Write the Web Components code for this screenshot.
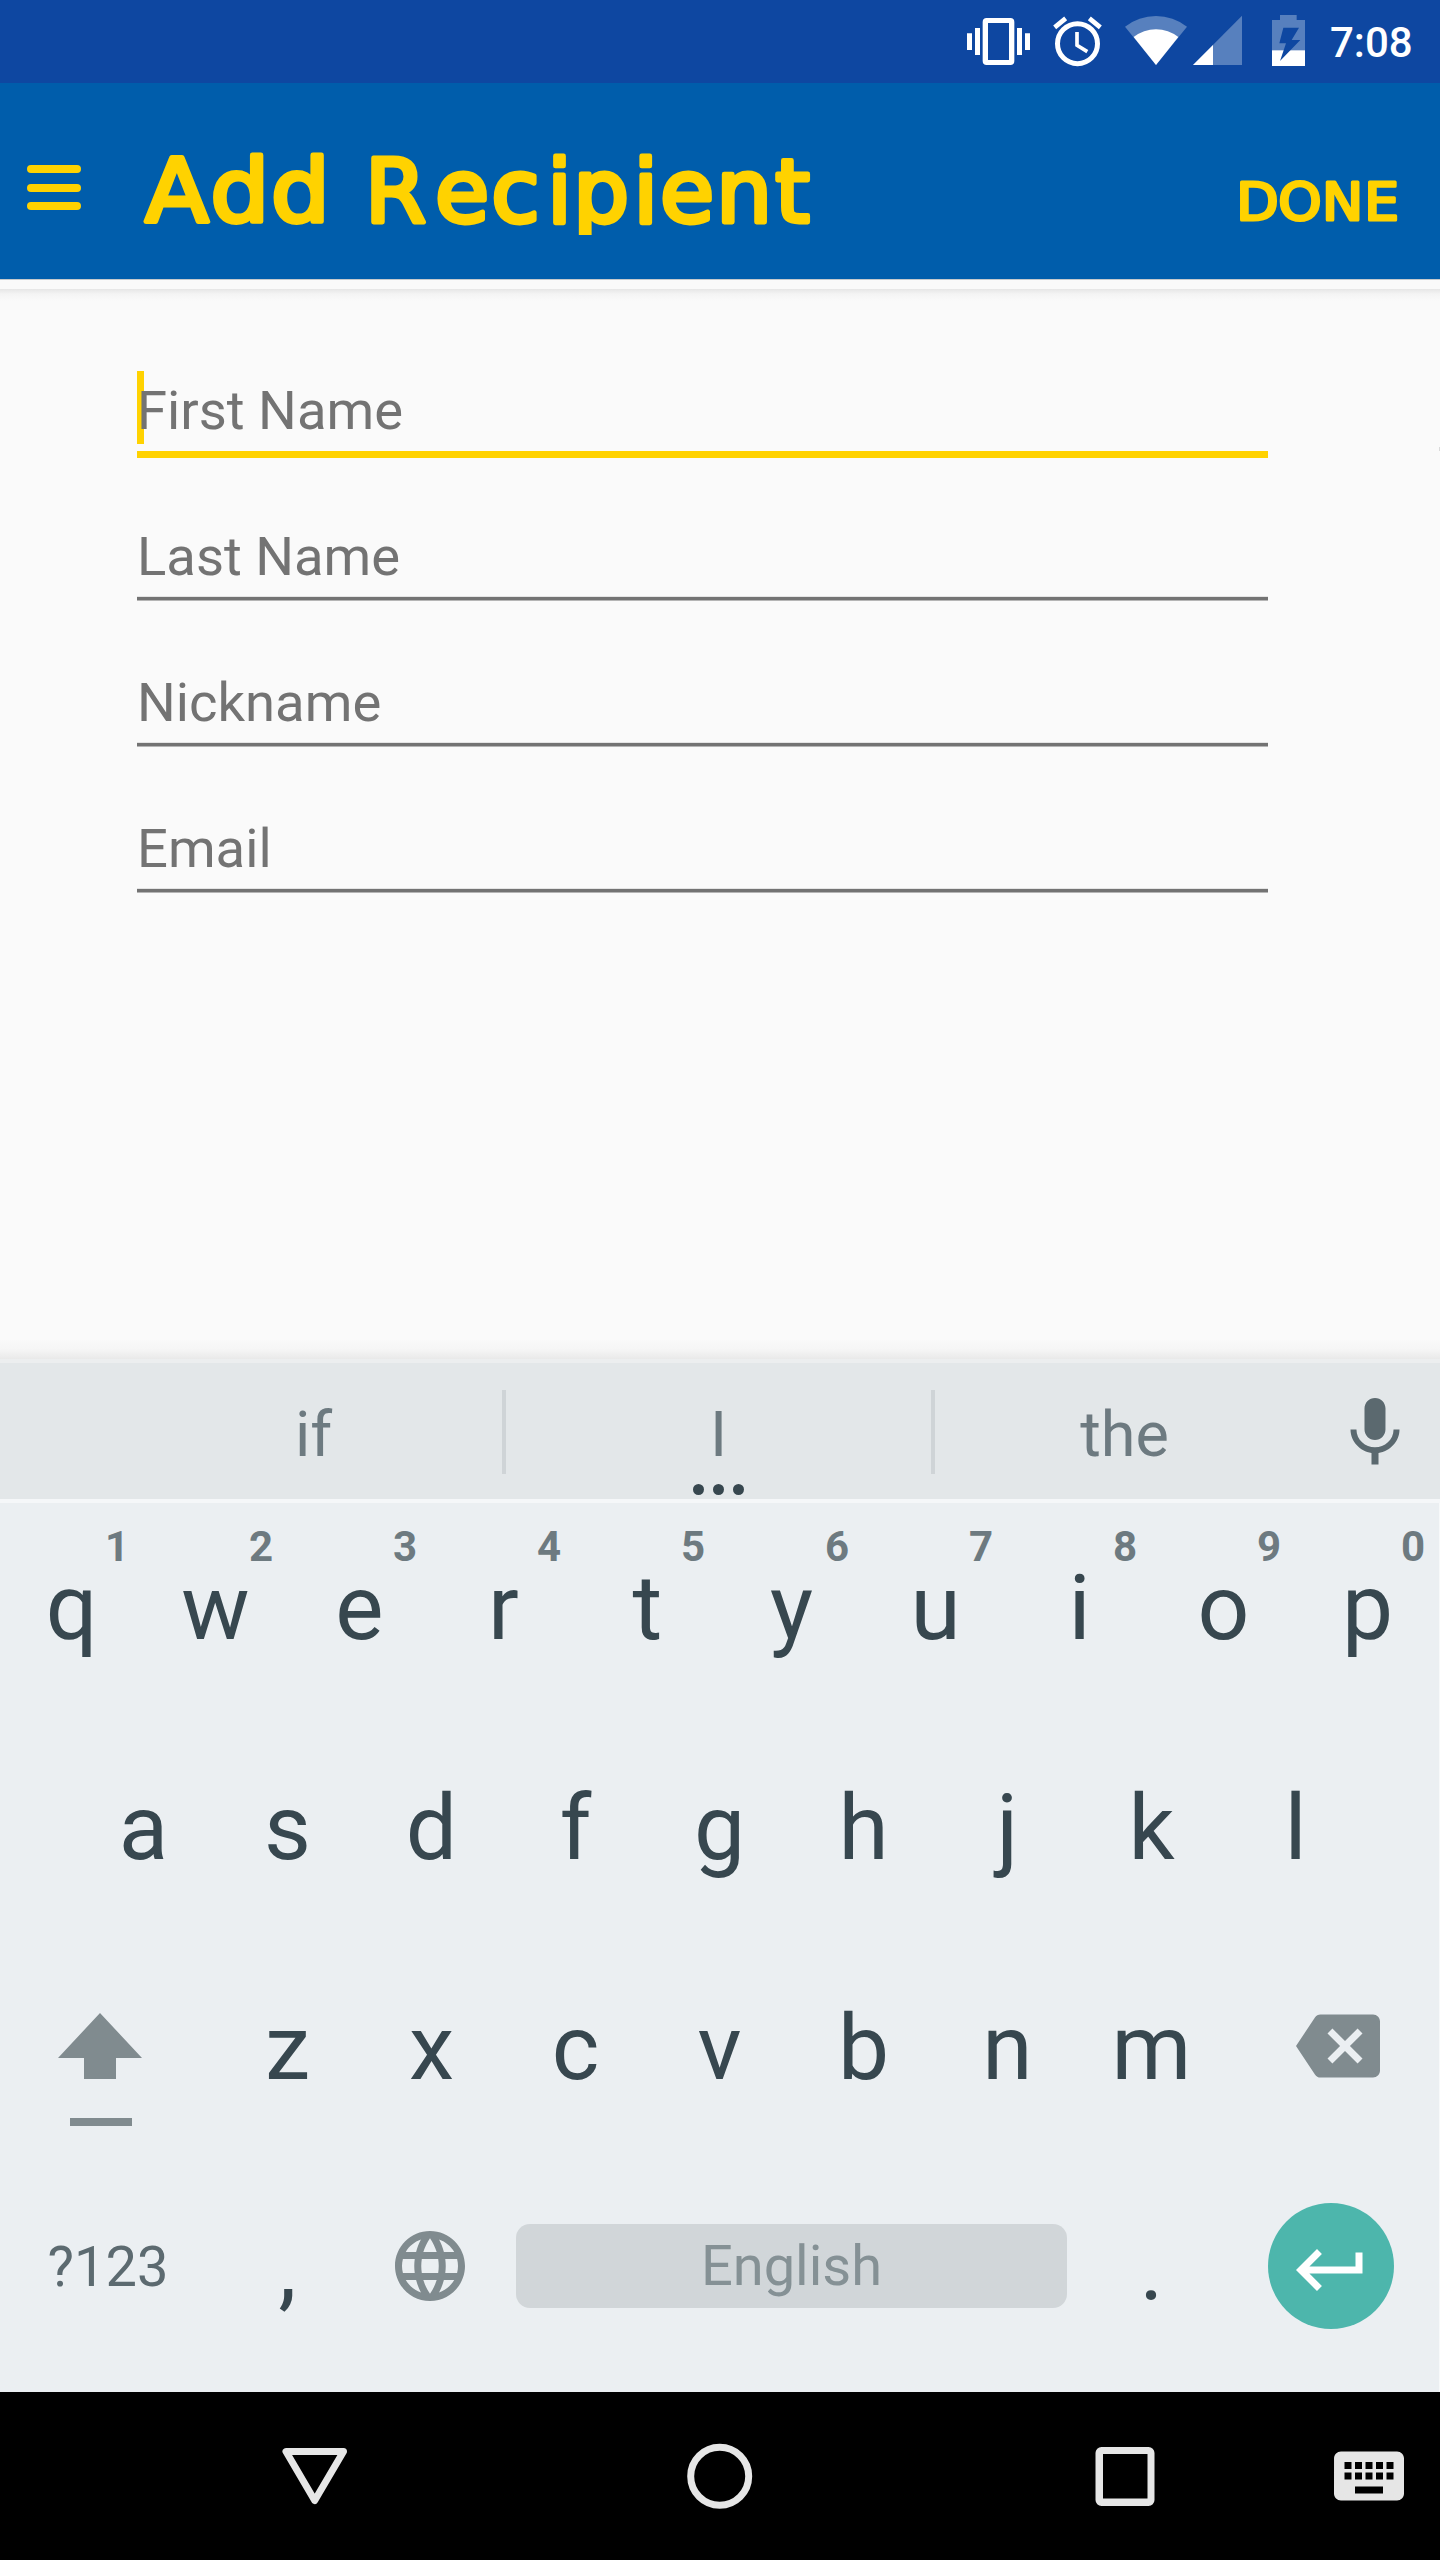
<!DOCTYPE html>
<html lang="en">
<head>
<meta charset="utf-8">
<title>Add Recipient</title>
<style>
html,body{margin:0;padding:0}
body{width:1440px;height:2560px;overflow:hidden;font-family:Roboto,sans-serif;background:#fafafa}
</style>
</head>
<body>
<recipient-screen></recipient-screen>
<script>
const define = (name, html, setup) => {
  const tpl = document.createElement('template');
  tpl.innerHTML = html;
  customElements.define(name, class extends HTMLElement {
    constructor() {
      super();
      this.attachShadow({mode: 'open'}).append(tpl.content.cloneNode(true));
    }
    connectedCallback() { if (setup) setup(this, this.shadowRoot); }
  });
};

define('status-bar', `
<style>
:host{display:flex;height:83px;background:#0e47a1;color:#fff;padding-left:967px;align-items:flex-start}
svg{display:block;height:83px;flex:none}
.alarm{margin-left:23px}.wifi{margin-left:23px}.cell{margin-left:6px}.batt{margin-left:30px}
time{font:500 42px/49px Roboto,sans-serif;margin:18px 0 0 25px;white-space:nowrap}
</style>
<svg width="63" viewBox="81 0 189 249" fill="#fff"><path fill-rule="evenodd" d="M140 54h71a12 12 0 0 1 12 12v117a12 12 0 0 1-12 12h-71a12 12 0 0 1-12-12V66a12 12 0 0 1 12-12zm4 15v111h63V69z"/><path d="M105 84h15v81h-15zM81 100h15v50H81zM231 84h15v81h-15zM255 100h15v50h-15z"/></svg>
<svg class="alarm" width="49" viewBox="339 0 147 249" fill="none" stroke="#fff"><circle cx="412.5" cy="131" r="60" stroke-width="15"/><path stroke-width="14" d="M344 82l33-27M481 82l-33-27"/><path stroke-width="11" d="M411 96v40l31 19"/></svg>
<svg class="wifi" width="62" viewBox="555 0 186 249"><path fill="#5780be" d="M648 195L555 80a151 151 0 0 1 186 0z"/><path fill="#fff" d="M648 195l-67-84a108 108 0 0 1 134 0z"/></svg>
<svg class="cell" width="49" viewBox="759 0 147 249"><path fill="#5780be" d="M759 195h147V47z"/><path fill="#fff" d="M759 195h60v-60z"/></svg>
<svg class="batt" width="33" viewBox="996 0 99 249"><path fill="#5780be" d="M1020 45h50v15h25v91h-99V60h24z"/><path fill="#fff" d="M996 151h99v47h-99z"/><path fill="#0e47a1" d="M1030 83h47l-22 37h26l-61 63 18-53h-20z"/></svg>
<time>7:08</time>`);

/* Toolbar lettering: round-joined outline gives the letters soft ends. */
define('app-bar', `
<style>
:host{display:flex;height:196px;background:#005dab;align-items:flex-start;padding-left:27px}
.menu{display:flex;flex-direction:column;gap:10.5px;margin-top:82px;width:54px;flex:none}
.menu i{height:8px;border-radius:4px;background:#ffd200}
svg{display:block;flex:none}
text{font-family:"DejaVu Sans",sans-serif;fill:#ffd200;stroke:#ffd200;stroke-linejoin:round;stroke-linecap:round}
.title{margin:47px 0 0 59px}
.done{margin:80px 0 0 412px}
</style>
<div class="menu"><i></i><i></i><i></i></div>
<svg class="title" width="680" height="125" viewBox="140 130 680 125"><g font-size="88" stroke-width="4.8"><text transform="translate(143.6 0) scale(1.05 1)" y="221.5" x="1.6 63.8 121.4">Add</text><text y="221.5" x="364.9 435.1 491.3 547.3 573.3 633.5 660.1 716.3 775.3">Recipient</text></g><rect x="560" y="235" width="90" height="20" fill="#005dab"/></svg>
<svg class="done" width="175" height="80" viewBox="1232 163 175 80"><text transform="translate(1240 0) scale(1.08 1)" font-size="51" stroke-width="3" y="220.5" x="-3.5 35.4 75.9 115">DONE</text></svg>`);

define('text-field', `
<style>
:host{display:flex;flex-direction:column;height:146px;box-sizing:border-box;position:relative;width:1131px;color:#737373}
.hint{position:relative;font-size:54.4px;line-height:66px;margin-top:24px;height:73px;white-space:nowrap}
.line{height:3px;background:#737373;border-top:1px solid #e4e4e4;border-bottom:1px solid #b5b5b5;margin-top:-1px}
.caret{display:none}
:host([focused]) .line{height:7px;border:0;background:#ffd200;margin-top:0}
:host([focused]) .caret{display:block;position:absolute;left:0;top:17px;width:7px;height:73px;background:#ffd200}
</style>
<span class="caret"></span>
<div class="hint"><slot></slot></div>
<div class="line"></div>`);

define('recipient-form', `
<style>
:host{display:flex;flex-direction:column;height:1080px;box-sizing:border-box;padding:75px 0 0 137px;position:relative;background:linear-gradient(#c5c9cc 0 1px,#fafafa 1px 10px,#e6e6e6 10px,#f4f4f4 15px,#fafafa 22px,#fafafa 1060px,#f6f6f6 1070px,#e9e9e9 1080px)}
.edge{position:absolute;right:0;top:168px;width:1px;height:4px;background:#dadada}
</style>
<text-field focused>First Name</text-field>
<text-field>Last Name</text-field>
<text-field>Nickname</text-field>
<text-field>Email</text-field>
<span class="edge"></span>`);

define('suggestion-strip', `
<style>
:host{display:flex;height:136px;padding-left:126px;background:#e3e7e9;border-top:4px solid #eceeef;border-bottom:4px solid #f5f7f9;color:#6d7a80}
.w{position:relative;display:flex;align-items:center;justify-content:center;font-size:63px;line-height:74px;box-sizing:border-box;padding-top:7px}
.sep{width:4px;height:84px;margin-top:27px;background:#cfd4d7}
.dots{position:absolute;left:0;right:0;top:120.5px;display:flex;justify-content:center;gap:9px}
.dots i{width:11px;height:11px;border-radius:50%;background:#37474f}
svg{display:block;margin:27.5px 0 0 19px}
</style>
<div class="w" style="width:376px;padding-right:1px">if</div><span class="sep"></span>
<div class="w" style="width:425px">I<span class="dots"><i></i><i></i><i></i></span></div><span class="sep"></span>
<div class="w" style="width:379px">the</div>
<svg width="84" height="84" viewBox="0 0 24 24" fill="#5b696f"><path d="M12 14c1.66 0 2.99-1.34 2.99-3L15 5c0-1.66-1.34-3-3-3S9 3.34 9 5v6c0 1.66 1.34 3 3 3zm5.3-3c0 3-2.54 5.1-5.3 5.1S6.7 14 6.7 11H5c0 3.41 2.72 6.23 6 6.72V21h2v-3.28c3.28-.48 6-3.3 6-6.72h-1.7z"/></svg>`);

define('letter-key', `
<style>
:host{display:flex;position:relative;width:144px;height:220px;box-sizing:border-box;padding:4px 1px 0 0;align-items:center;justify-content:center;font-size:91px;line-height:108px;color:#37474f;flex:none}
.alt{position:absolute;left:67px;width:100px;top:26px;text-align:center;font:700 42px/49px Roboto,sans-serif;color:#6d7a80}
</style>
<slot></slot>`, (el, root) => {
  const alt = el.getAttribute('alt');
  if (alt) {
    const s = document.createElement('span');
    s.className = 'alt';
    s.textContent = alt;
    root.append(s);
  }
});

define('key-row', `
<style>
:host{display:flex;height:220px;align-items:center;justify-content:center}
</style><slot></slot>`, el => {
  const keys = el.getAttribute('keys');
  if (!keys) return;
  const alts = el.getAttribute('alts') || '';
  const anchor = el.querySelector('[data-end]');
  [...keys].forEach((k, i) => {
    const key = document.createElement('letter-key');
    if (alts[i]) key.setAttribute('alt', alts[i]);
    key.textContent = k;
    el.insertBefore(key, anchor);
  });
});

define('soft-keyboard', `
<style>
:host{display:flow-root;height:889px;box-sizing:border-box;background:#ebeff2;border-right:1px solid #f7f9fa}
.rows{display:flex;flex-direction:column;width:1440px;margin-top:-7px}
svg{display:block;flex:none}
.side{display:flex;width:216px;height:220px;flex:none;align-items:center}
.shift{padding-left:58px;box-sizing:border-box}
.del{padding-left:72px;box-sizing:border-box}
.sym{justify-content:center;font-size:56px;line-height:66px;color:#5c6a70;padding-top:2px;box-sizing:border-box}
.globe{width:156px;padding-left:28px;box-sizing:border-box}
.space{width:551px;height:84px;flex:none;border-radius:14px;background:#d1d6d9;color:#859195;font-size:56px;line-height:84px;text-align:center;margin-right:13px}
.enter{display:flex;width:126px;height:126px;border-radius:50%;background:#4db6ac;margin-left:44px;align-items:center;justify-content:center}
.enter svg{margin-top:8px}
</style>
<div class="rows">
<key-row keys="qwertyuiop" alts="1234567890"></key-row>
<key-row keys="asdfghjkl"></key-row>
<key-row keys="zxcvbnm">
<div class="side shift"><svg width="84" height="114" viewBox="0 0 84 114" fill="#808b8f" style="margin-top:48px"><path d="M42 0l42 45H58v21H26V45H0z"/><path d="M12 105h62v8H12z"/></svg></div>
<div class="side del" data-end><svg width="84" height="84" viewBox="0 0 24 24" fill="#808b8f"><path d="M22 3H7c-.69 0-1.23.35-1.59.88L0 12l5.41 8.11c.36.53.9.89 1.59.89h15c1.1 0 2-.9 2-2V5c0-1.1-.9-2-2-2zm-3 12.59L17.59 17 14 13.41 10.41 17 9 15.59 12.59 12 9 8.41 10.41 7 14 10.59 17.59 7 19 8.41 15.41 12 19 15.59z"/></svg></div>
</key-row>
<key-row>
<div class="side sym">?123</div>
<letter-key>,</letter-key>
<div class="side globe"><svg width="84" height="84" viewBox="0 0 24 24" fill="#808b8f"><path d="M11.99 2C6.47 2 2 6.48 2 12s4.47 10 9.99 10C17.52 22 22 17.52 22 12S17.52 2 11.99 2zm6.93 6h-2.95c-.32-1.25-.78-2.45-1.38-3.56 1.84.63 3.37 1.91 4.33 3.56zM12 4.04c.83 1.2 1.48 2.53 1.91 3.96h-3.82c.43-1.43 1.08-2.76 1.91-3.96zM4.26 14C4.1 13.36 4 12.69 4 12s.1-1.36.26-2h3.38c-.08.66-.14 1.32-.14 2 0 .68.06 1.34.14 2H4.26zm.82 2h2.95c.32 1.25.78 2.45 1.38 3.56-1.84-.63-3.37-1.9-4.33-3.56zm2.95-8H5.08c.96-1.66 2.49-2.93 4.33-3.56C8.81 5.55 8.35 6.75 8.03 8zM12 19.96c-.83-1.2-1.48-2.53-1.91-3.96h3.82c-.43 1.43-1.08 2.76-1.91 3.96zM14.34 14H9.66c-.09-.66-.16-1.32-.16-2 0-.68.07-1.35.16-2h4.68c.09.65.16 1.32.16 2 0 .68-.07 1.34-.16 2zm.25 5.56c.6-1.11 1.06-2.31 1.38-3.56h2.95c-.96 1.65-2.49 2.93-4.33 3.56zM16.36 14c.08-.66.14-1.32.14-2 0-.68-.06-1.34-.14-2h3.38c.16.64.26 1.31.26 2s-.1 1.36-.26 2h-3.38z"/></svg></div>
<div class="space">English</div>
<letter-key>.</letter-key>
<div class="side"><div class="enter"><svg width="84" height="84" viewBox="0 0 24 24" fill="#fff"><path d="M19 7v4H5.83l3.58-3.59L8 6l-6 6 6 6 1.41-1.41L5.83 13H21V7z"/></svg></div></div>
</key-row>
</div>`);

define('nav-bar', `
<style>
:host{display:flex;height:168px;background:#000;padding-left:112px;align-items:center}
span{display:flex;width:405px;justify-content:center;flex:none}
svg{display:block;flex:none}
</style>
<span><svg width="66" height="66" viewBox="282 2443.5 66 66" fill="none" stroke="#e6e6e6" stroke-width="7" stroke-linejoin="round"><path d="M286 2452h57.5L314.7 2501z"/></svg></span>
<span><svg width="66" height="66" fill="none" stroke="#e6e6e6" stroke-width="7"><circle cx="32.7" cy="33.2" r="29"/></svg></span>
<span><svg width="60" height="60" fill="#e6e6e6"><path fill-rule="evenodd" d="M6.5 1h47a6 6 0 0 1 6 6v47a6 6 0 0 1-6 6h-47a6 6 0 0 1-6-6V7a6 6 0 0 1 6-6zM8 8v44.5h44.5V8z"/></svg></span>
<svg width="84" height="84" viewBox="0 0 24 24" fill="#e6e6e6"><path d="M20 5H4c-1.1 0-1.99.9-1.99 2L2 17c0 1.1.9 2 2 2h16c1.1 0 2-.9 2-2V7c0-1.1-.9-2-2-2zm-9 3h2v2h-2V8zm0 3h2v2h-2v-2zM8 8h2v2H8V8zm0 3h2v2H8v-2zm-1 2H5v-2h2v2zm0-3H5V8h2v2zm9 7H8v-2h8v2zm0-4h-2v-2h2v2zm0-3h-2V8h2v2zm3 3h-2v-2h2v2zm0-3h-2V8h2v2z"/></svg>`);

define('recipient-screen', `
<style>
:host{display:flex;flex-direction:column;width:1440px;height:2560px;overflow:hidden;font-family:Roboto,sans-serif}
</style>
<status-bar></status-bar>
<app-bar></app-bar>
<recipient-form></recipient-form>
<suggestion-strip></suggestion-strip>
<soft-keyboard></soft-keyboard>
<nav-bar></nav-bar>`);
</script>
</body>
</html>
